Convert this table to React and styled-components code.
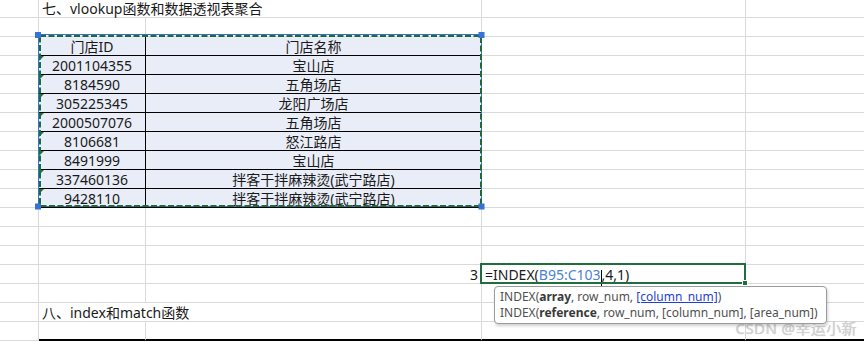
import React from 'react';
import styled, { createGlobalStyle } from 'styled-components';

const GlobalStyle = createGlobalStyle`
  html, body {
    margin: 0;
    padding: 0;
    background: #fff;
  }
  body {
    width: 864px;
    height: 341px;
    overflow: hidden;
    font-family: "Noto Sans", "Noto Sans CJK SC", sans-serif;
    font-size: 14px;
    color: #1a1a1a;
  }
`;

const COLUMNS = '39px 107px 336px 264px 1fr';

const Sheet = styled.div`
  position: relative;
  margin-top: -1px;
  width: 864px;
`;

const Row = styled.div`
  display: grid;
  grid-template-columns: ${COLUMNS};
  height: 19px;
`;

const Cell = styled.div`
  position: relative;
  box-sizing: border-box;
  display: flex;
  align-items: flex-end;
  justify-content: ${(p) => p.$align || 'flex-start'};
  grid-column: span ${(p) => p.$span || 1};
  padding: 0 3px;
  line-height: 16px;
  white-space: nowrap;
  border-right: ${(p) => (p.$last ? 'none' : '1px solid #dadada')};
  border-bottom: ${(p) => (p.$closing ? '2px solid #000' : '1px solid #dadada')};
`;

const TableCell = styled(Cell)`
  justify-content: center;
  background: #e9edf7;
  border-bottom: 1px solid #000;
  border-right: ${(p) => (p.$divider ? '1px solid #000' : '1px solid #dadada')};

  ${(p) =>
    p.$flag &&
    `
    &::before {
      content: '';
      position: absolute;
      top: 0;
      left: 0;
      border-top: 5px solid #1c7a30;
      border-right: 5px solid transparent;
    }
  `}
`;

const ActiveCell = styled(Cell)`
  z-index: 3;
  padding-left: 3px;

  &::after {
    content: '';
    position: absolute;
    top: -2px;
    left: -2px;
    right: -1px;
    bottom: -1px;
    border: 2px solid #1f6e3d;
    pointer-events: none;
  }
`;

const FillHandle = styled.span`
  position: absolute;
  right: -3px;
  bottom: -3px;
  width: 4px;
  height: 4px;
  background: #1f6e3d;
  border: 1px solid #fff;
  z-index: 4;
`;

const Ref = styled.span`
  color: #4a82d8;
`;

const Caret = styled.span`
  display: inline-block;
  width: 1px;
  height: 16px;
  margin: 0 0 -3px;
  background: #000;
`;

const Marquee = styled.svg`
  position: absolute;
  left: 34px;
  top: 32px;
  z-index: 2;
  overflow: visible;
`;

const Tooltip = styled.div`
  position: absolute;
  left: 12px;
  top: 21px;
  z-index: 5;
  padding: 2px 8px 2px 5px;
  background: #fff;
  border: 1px solid #9c9c9c;
  border-radius: 4px;
  box-shadow: 1px 2px 3px rgba(0, 0, 0, 0.18);
  font-size: 12px;
  line-height: 16px;
  color: #505050;
  white-space: nowrap;
`;

const Signature = styled.div`
  display: block;
`;

const Arg = styled.b`
  font-weight: 700;
  color: #3a3a3a;
`;

const CurrentArg = styled.span`
  color: #1f3fd9;
  text-decoration: underline;
`;

const Watermark = styled.div`
  position: absolute;
  right: 7px;
  top: 320px;
  font-size: 15px;
  line-height: 17px;
  color: #d2d2d2;
  text-shadow: 0 0 1px rgba(0, 0, 0, 0.25);
  letter-spacing: 0.4px;
  pointer-events: none;
`;

const tableRows = [
  ['门店ID', '门店名称'],
  ['2001104355', '宝山店'],
  ['8184590', '五角场店'],
  ['305225345', '龙阳广场店'],
  ['2000507076', '五角场店'],
  ['8106681', '怒江路店'],
  ['8491999', '宝山店'],
  ['337460136', '拌客干拌麻辣烫(武宁路店)'],
  ['9428110', '拌客干拌麻辣烫(武宁路店)'],
];

const EmptyRow = ({ closing }) => (
  <Row>
    <Cell />
    <Cell $closing={closing} />
    <Cell $closing={closing} />
    <Cell $closing={closing} />
    <Cell $closing={closing} $last />
  </Row>
);

const TitleRow = ({ children }) => (
  <Row>
    <Cell />
    <Cell $span={2}>{children}</Cell>
    <Cell />
    <Cell $last />
  </Row>
);

const SelectionMarquee = () => {
  const w = 450;
  const h = 180;
  const handles = [
    [4, 4],
    [447.5, 4],
    [4, 175.5],
    [447.5, 175.5],
  ];
  return (
    <Marquee width={w} height={h} viewBox={`0 0 ${w} ${h}`}>
      <rect x="4.5" y="3.5" width="443" height="172" fill="none" stroke="#3573d6" strokeWidth="1" />
      <rect x="6" y="5" width="441" height="170" fill="none" stroke="#1e6b3a" strokeWidth="2" strokeDasharray="6 2.5" />
      {handles.map(([cx, cy], i) => (
        <rect key={i} x={cx - 3} y={cy - 3} width="6" height="6" fill="#3573d6" />
      ))}
    </Marquee>
  );
};

const App = () => (
  <>
    <GlobalStyle />
    <Sheet>
      <TitleRow>七、vlookup函数和数据透视表聚合</TitleRow>
      <EmptyRow />
      {tableRows.map(([id, name], i) => (
        <Row key={id}>
          <Cell />
          <TableCell $divider $flag={i > 0}>{id}</TableCell>
          <TableCell>{name}</TableCell>
          <Cell />
          <Cell $last />
        </Row>
      ))}
      <EmptyRow />
      <EmptyRow />
      <EmptyRow />
      <Row>
        <Cell />
        <Cell />
        <Cell $align="flex-end">3</Cell>
        <ActiveCell>
          =INDEX(<Ref>B95:C103</Ref>
          <Caret />
          ,4,1)
          <FillHandle />
          <Tooltip>
            <Signature>
              INDEX(<Arg>array</Arg>, row_num, <CurrentArg>[column_num]</CurrentArg>)
            </Signature>
            <Signature>
              INDEX(<Arg>reference</Arg>, row_num, [column_num], [area_num])
            </Signature>
          </Tooltip>
        </ActiveCell>
        <Cell $last />
      </Row>
      <EmptyRow />
      <TitleRow>八、index和match函数</TitleRow>
      <EmptyRow closing />
      <SelectionMarquee />
    </Sheet>
    <Watermark>CSDN @幸运小新</Watermark>
  </>
);

export default App;
